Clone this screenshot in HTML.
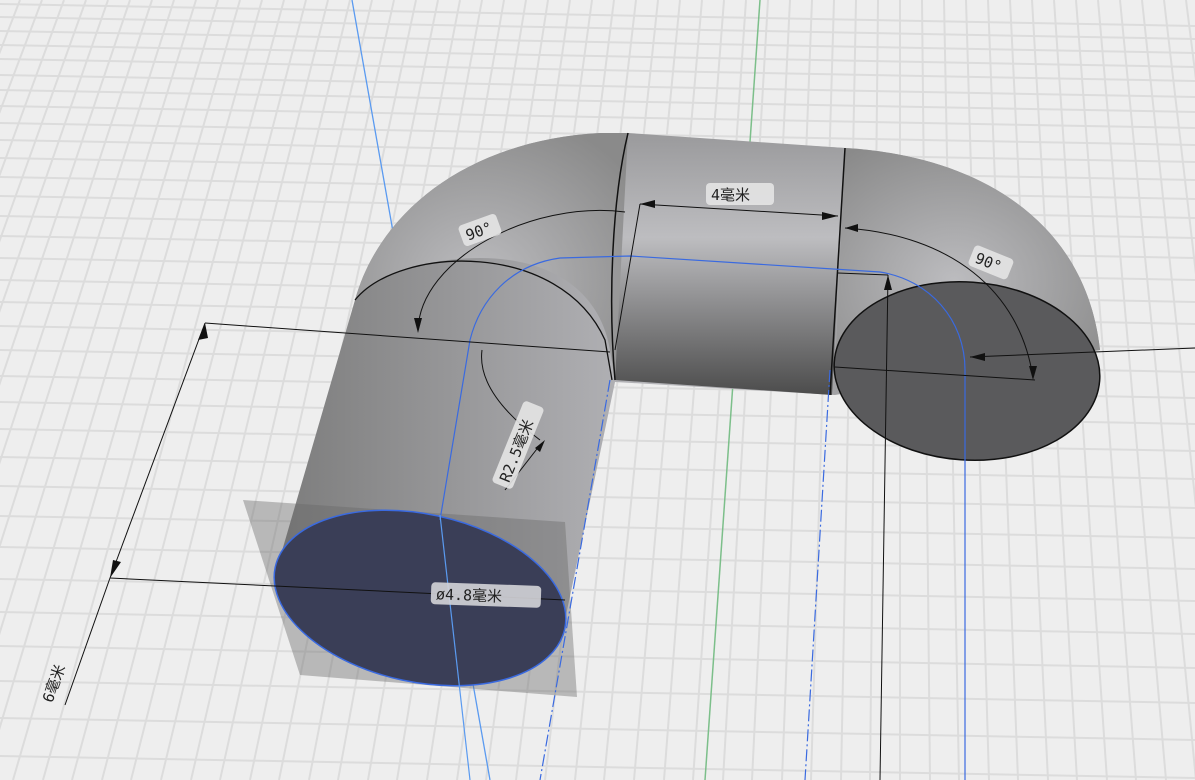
<!DOCTYPE html>
<html><head><meta charset="utf-8"><style>
html,body{margin:0;padding:0;background:#eeeeee;overflow:hidden}
svg{display:block}
text{font-family:"DejaVu Sans Mono","Noto Sans CJK SC",monospace;font-size:15px;fill:#222}
</style></head><body>
<svg width="1195" height="780" viewBox="0 0 1195 780" xmlns="http://www.w3.org/2000/svg">
<defs>
<linearGradient id="gl" x1="0" y1="0" x2="1" y2="0">
<stop offset="0" stop-color="#7c7c7c"/><stop offset="0.45" stop-color="#b4b4b8"/><stop offset="1" stop-color="#8a8a8a"/></linearGradient>
<linearGradient id="gm" x1="0" y1="0" x2="0" y2="1">
<stop offset="0" stop-color="#9a9a9c"/><stop offset="0.4" stop-color="#bdbdc0"/><stop offset="1" stop-color="#4c4c4c"/></linearGradient>
<radialGradient id="gr" cx="0.45" cy="0.6" r="0.7">
<stop offset="0" stop-color="#bcbcbf"/><stop offset="1" stop-color="#8a8a8a"/></radialGradient>
</defs>
<rect width="1195" height="780" fill="#eeeeee"/>
<g stroke="#dcdcdc" stroke-width="2" fill="none">
<line x1="20" y1="0" x2="-282" y2="780"/><line x1="42" y1="0" x2="-253" y2="780"/><line x1="64" y1="0" x2="-223" y2="780"/><line x1="86" y1="0" x2="-194" y2="780"/><line x1="108" y1="0" x2="-164" y2="780"/><line x1="130" y1="0" x2="-135" y2="780"/><line x1="152" y1="0" x2="-105" y2="780"/><line x1="174" y1="0" x2="-75" y2="780"/><line x1="196" y1="0" x2="-46" y2="780"/><line x1="218" y1="0" x2="-16" y2="780"/><line x1="240" y1="0" x2="13" y2="780"/><line x1="262" y1="0" x2="43" y2="780"/><line x1="284" y1="0" x2="72" y2="780"/><line x1="306" y1="0" x2="102" y2="780"/><line x1="328" y1="0" x2="131" y2="780"/><line x1="350" y1="0" x2="161" y2="780"/><line x1="372" y1="0" x2="191" y2="780"/><line x1="394" y1="0" x2="220" y2="780"/><line x1="416" y1="0" x2="250" y2="780"/><line x1="438" y1="0" x2="279" y2="780"/><line x1="460" y1="0" x2="309" y2="780"/><line x1="482" y1="0" x2="338" y2="780"/><line x1="504" y1="0" x2="368" y2="780"/><line x1="526" y1="0" x2="397" y2="780"/><line x1="548" y1="0" x2="427" y2="780"/><line x1="570" y1="0" x2="457" y2="780"/><line x1="592" y1="0" x2="486" y2="780"/><line x1="614" y1="0" x2="516" y2="780"/><line x1="636" y1="0" x2="545" y2="780"/><line x1="658" y1="0" x2="575" y2="780"/><line x1="680" y1="0" x2="604" y2="780"/><line x1="702" y1="0" x2="634" y2="780"/><line x1="724" y1="0" x2="664" y2="780"/><line x1="746" y1="0" x2="693" y2="780"/><line x1="768" y1="0" x2="723" y2="780"/><line x1="790" y1="0" x2="752" y2="780"/><line x1="812" y1="0" x2="782" y2="780"/><line x1="834" y1="0" x2="811" y2="780"/><line x1="856" y1="0" x2="841" y2="780"/><line x1="878" y1="0" x2="870" y2="780"/><line x1="900" y1="0" x2="900" y2="780"/><line x1="922" y1="0" x2="930" y2="780"/><line x1="944" y1="0" x2="959" y2="780"/><line x1="966" y1="0" x2="989" y2="780"/><line x1="988" y1="0" x2="1018" y2="780"/><line x1="1010" y1="0" x2="1048" y2="780"/><line x1="1032" y1="0" x2="1077" y2="780"/><line x1="1054" y1="0" x2="1107" y2="780"/><line x1="1076" y1="0" x2="1136" y2="780"/><line x1="1098" y1="0" x2="1166" y2="780"/><line x1="1120" y1="0" x2="1196" y2="780"/><line x1="1142" y1="0" x2="1225" y2="780"/><line x1="1164" y1="0" x2="1255" y2="780"/><line x1="1186" y1="0" x2="1284" y2="780"/>
<line x1="0" y1="4" x2="1195" y2="26"/><line x1="0" y1="17" x2="1195" y2="39"/><line x1="0" y1="31" x2="1195" y2="53"/><line x1="0" y1="45" x2="1195" y2="67"/><line x1="0" y1="59" x2="1195" y2="81"/><line x1="0" y1="75" x2="1195" y2="97"/><line x1="0" y1="90" x2="1195" y2="112"/><line x1="0" y1="106" x2="1195" y2="128"/><line x1="0" y1="123" x2="1195" y2="145"/><line x1="0" y1="140" x2="1195" y2="162"/><line x1="0" y1="158" x2="1195" y2="180"/><line x1="0" y1="177" x2="1195" y2="199"/><line x1="0" y1="196" x2="1195" y2="218"/><line x1="0" y1="216" x2="1195" y2="238"/><line x1="0" y1="236" x2="1195" y2="258"/><line x1="0" y1="258" x2="1195" y2="280"/><line x1="0" y1="280" x2="1195" y2="302"/><line x1="0" y1="302" x2="1195" y2="324"/><line x1="0" y1="326" x2="1195" y2="348"/><line x1="0" y1="350" x2="1195" y2="372"/><line x1="0" y1="376" x2="1195" y2="398"/><line x1="0" y1="402" x2="1195" y2="424"/><line x1="0" y1="429" x2="1195" y2="451"/><line x1="0" y1="457" x2="1195" y2="479"/><line x1="0" y1="486" x2="1195" y2="508"/><line x1="0" y1="516" x2="1195" y2="538"/><line x1="0" y1="547" x2="1195" y2="569"/><line x1="0" y1="579" x2="1195" y2="601"/><line x1="0" y1="612" x2="1195" y2="634"/><line x1="0" y1="646" x2="1195" y2="668"/><line x1="0" y1="681" x2="1195" y2="703"/><line x1="0" y1="718" x2="1195" y2="740"/><line x1="0" y1="756" x2="1195" y2="778"/>
</g>
<line x1="760" y1="0" x2="705" y2="780" stroke="#7cbf8a" stroke-width="1.5"/>
<line x1="352" y1="0" x2="490" y2="780" stroke="#5a9af0" stroke-width="1.3"/>
<path d="M275,575 L355,300 C380,210 470,140 600,133 L845,148 C970,155 1085,215 1100,350 L835,395 L615,382 L565,620 Z" fill="url(#gl)"/>
<path d="M355,300 C380,210 470,140 600,133 L630,133 L615,380 L610,350 C600,290 550,258 480,258 C420,258 365,280 355,300Z" fill="url(#gr)"/>
<path d="M628,133 L845,148 L832,395 L615,380 Z" fill="url(#gm)"/>
<path d="M845,148 C970,155 1085,215 1100,350 L835,370 Z" fill="url(#gr)"/>
<path d="M628,133 C612,200 608,300 615,380" stroke="#111" stroke-width="1.5" fill="none"/>
<path d="M845,148 C840,220 835,300 830,395" stroke="#111" stroke-width="1.5" fill="none"/>
<path d="M355,300 C400,245 560,240 605,340 L612,380" stroke="#111" stroke-width="1.3" fill="none"/>
<polygon points="243,500 565,522 577,697 300,675" fill="#666" opacity="0.4"/>
<ellipse cx="420" cy="598" rx="148" ry="84" transform="rotate(12 420 598)" fill="#3a3e57" stroke="#3a6ae0" stroke-width="1.5"/>
<ellipse cx="967" cy="371" rx="133" ry="89" transform="rotate(4 967 371)" fill="#5a5a5c" stroke="#111" stroke-width="1.5"/>
<path d="M440,520 L470,340 C480,300 510,265 560,258 L630,256 L880,272 C930,280 965,320 965,370 L965,780" stroke="#3a6ae0" stroke-width="1.2" fill="none"/>
<line x1="610" y1="380" x2="540" y2="780" stroke="#3a6ae0" stroke-width="1.2" stroke-dasharray="12,3,2,3"/>
<line x1="830" y1="370" x2="805" y2="780" stroke="#3a6ae0" stroke-width="1.2" stroke-dasharray="12,3,2,3"/>
<line x1="440" y1="515" x2="470" y2="780" stroke="#5a9af0" stroke-width="1.2"/>
<g stroke="#111" stroke-width="1" fill="none">
<line x1="205" y1="323" x2="610" y2="352"/>
<line x1="110" y1="578" x2="565" y2="600"/>
<line x1="205" y1="323" x2="110" y2="578"/>
<line x1="110" y1="578" x2="65" y2="705"/>
<line x1="888" y1="275" x2="880" y2="780"/>
<line x1="970" y1="357" x2="1195" y2="348"/>
<line x1="835" y1="367" x2="1035" y2="380"/>
<line x1="640" y1="204" x2="838" y2="216"/>
<line x1="640" y1="204" x2="615" y2="350"/>
<line x1="838" y1="273" x2="888" y2="275"/>
<path d="M418,330 C420,260 530,200 625,212"/>
<path d="M845,228 C950,235 1020,290 1033,378"/>
<path d="M482,350 C478,380 500,410 540,440"/>
<line x1="540" y1="445" x2="505" y2="490"/>
</g>
<g fill="#111">
<polygon points="205,323 198,340 208,338"/>
<polygon points="110,578 113,560 121,562"/>
<polygon points="640,204 655,200 655,208"/>
<polygon points="838,216 822,212 822,220"/>
<polygon points="888,275 884,290 892,290"/>
<polygon points="970,357 985,353 985,361"/>
<polygon points="1033,380 1029,366 1037,366"/>
<polygon points="418,333 414,318 422,318"/>
<polygon points="845,228 858,224 858,232"/>
<polygon points="545,440 535,448 540,452"/>
</g>
<g>
<rect x="706" y="183" width="68" height="22" rx="4" fill="#e4e4e4" opacity="0.9"/>
<text x="711" y="200">4毫米</text>
<g transform="rotate(-20 480 230)"><rect x="460" y="219" width="40" height="22" rx="4" fill="#e4e4e4" opacity="0.9"/><text x="465" y="236">90°</text></g>
<g transform="rotate(22 990 262)"><rect x="970" y="251" width="42" height="22" rx="4" fill="#e4e4e4" opacity="0.9"/><text x="975" y="268">90°</text></g>
<g transform="rotate(-68 518 445)"><rect x="474" y="434" width="88" height="22" rx="4" fill="#e4e4e4" opacity="0.9"/><text x="479" y="451">R2.5毫米</text></g>
<g transform="rotate(2 485 595)"><rect x="431" y="584" width="110" height="22" rx="4" fill="#d4d4d8" opacity="0.9"/><text x="436" y="601">ø4.8毫米</text></g>
<g transform="rotate(-70 55 678)"><text x="30" y="684">6毫米</text></g>
</g>
</svg>
</body></html>
